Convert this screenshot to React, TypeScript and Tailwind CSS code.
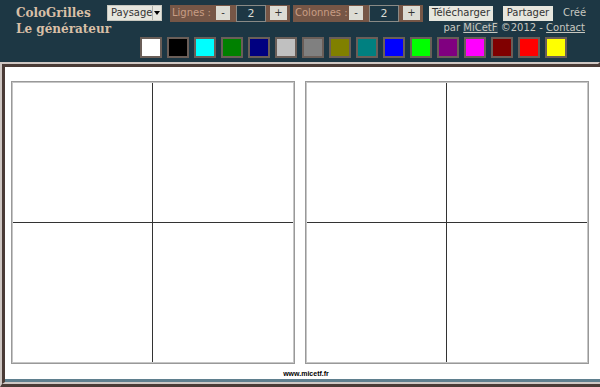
const swatches = [
  '#ffffff',
  '#000000',
  '#00ffff',
  '#008000',
  '#000080',
  '#c0c0c0',
  '#808080',
  '#808000',
  '#008080',
  '#0000ff',
  '#00ff00',
  '#800080',
  '#ff00ff',
  '#800000',
  '#ff0000',
  '#ffff00',
];

function Stepper({ label, width }: { label: string; width: string }) {
  return (
    <div className={`flex items-center h-[17px] bg-[#765646] pl-[2px] pr-[3px] ${width}`}>
      <span className="text-[#c89d84] text-[10px] leading-none whitespace-nowrap">{label}</span>
      <div className="flex-1" />
      <button className="w-[14px] h-[14px] bg-[#dcdcd4] text-[#333] text-[10px] leading-none flex items-center justify-center">
        -
      </button>
      <div className="ml-[6px] w-[30px] h-[17px] border border-[#8a8a86] bg-[#1d3744] text-[#dcdcd4] text-[11px] leading-none flex items-center justify-center">
        2
      </div>
      <button className="ml-[4px] w-[17px] h-[14px] bg-[#dcdcd4] text-[#333] text-[10px] leading-none flex items-center justify-center">
        +
      </button>
    </div>
  );
}

function Grid() {
  return (
    <div className="w-[284px] h-[283px] border border-[#999] bg-white">
      <div className="w-full h-full border border-[#c6c6c6] grid grid-cols-2 grid-rows-2">
        <div className="border-r border-b border-[#333]" />
        <div className="border-b border-[#333]" />
        <div className="border-r border-[#333]" />
        <div />
      </div>
    </div>
  );
}

export default function App() {
  return (
    <div className="w-[600px] h-[387px] flex flex-col bg-[#1d3744] font-['DejaVu_Sans',sans-serif] overflow-hidden">
      {/* entête */}
      <header className="h-[62px] flex shrink-0">
        <div className="w-[107px] pl-[16px] pt-[5px] font-['DejaVu_Serif',serif] font-bold text-[12px] leading-[16px] text-[#d8bfa6] whitespace-nowrap">
          <div>ColoGrilles</div>
          <div>Le générateur</div>
        </div>
        <div className="flex-1 flex flex-col pt-[5px]">
          <div className="flex items-center h-[16px]">
            <div className="w-[55px] h-[16px] bg-[#e6e6de] border border-[#c8c8c0] flex items-center">
              <span className="flex-1 pl-[3px] text-[10px] text-[#333] leading-none">Paysage</span>
              <span className="w-[10px] h-full border-l border-[#b0b0a8] flex items-center justify-center">
                <span className="w-0 h-0 border-l-[3px] border-r-[3px] border-t-[4px] border-l-transparent border-r-transparent border-t-black" />
              </span>
            </div>
            <div className="ml-[8px]">
              <Stepper label="Lignes :" width="w-[120px]" />
            </div>
            <div className="ml-[3px]">
              <Stepper label="Colonnes :" width="w-[130px]" />
            </div>
            <button className="ml-[6px] w-[64px] h-[15px] bg-[#e6e6de] text-[#333] text-[10px] leading-none">
              Télécharger
            </button>
            <button className="ml-[10px] w-[50px] h-[15px] bg-[#e6e6de] text-[#333] text-[10px] leading-none">
              Partager
            </button>
            <span className="ml-[10px] text-[10px] text-[#c8c8c0] leading-none">Créé</span>
          </div>
          <div className="mt-[1px] pr-[15px] text-right text-[10px] text-[#c8c8c0] leading-[11px]">
            par <span className="underline bg-[#2b4552]">MiCetF</span> ©2012 - <span className="underline">Contact</span>
          </div>
          <div className="mt-[4px] ml-[33px] flex gap-[5px]">
            {swatches.map((c) => (
              <div
                key={c}
                className="w-[22px] h-[21px] border-2 border-[#6a5e58]"
                style={{ backgroundColor: c }}
              />
            ))}
          </div>
        </div>
      </header>

      {/* feuille */}
      <div className="flex-1 flex border-t-2 border-l-2 border-r-[2px] border-b-[3px] border-t-[#cfc7c3] border-l-[#cfc7c3] border-r-[#4a3b36] border-b-[#4a3b36]">
        <div className="flex-1 flex flex-col border-t-[3px] border-l-[3px] border-r-2 border-b-[2px] border-t-[#4a3b36] border-l-[#4a3b36] border-r-[#cfc7c3] border-b-[#cfc7c3]">
          <div className="flex-1 bg-white flex flex-col pt-[14px] pl-[6px]">
            <div className="flex gap-[10px]">
              <Grid />
              <Grid />
            </div>
            <div className="mt-[6px] w-[590px] text-center font-['Liberation_Sans',sans-serif] font-bold text-[7px] leading-[8px] text-black">
              www.micetf.fr
            </div>
          </div>
          <div className="h-[3px] bg-[#5f7f8e]" />
        </div>
      </div>
    </div>
  );
}
